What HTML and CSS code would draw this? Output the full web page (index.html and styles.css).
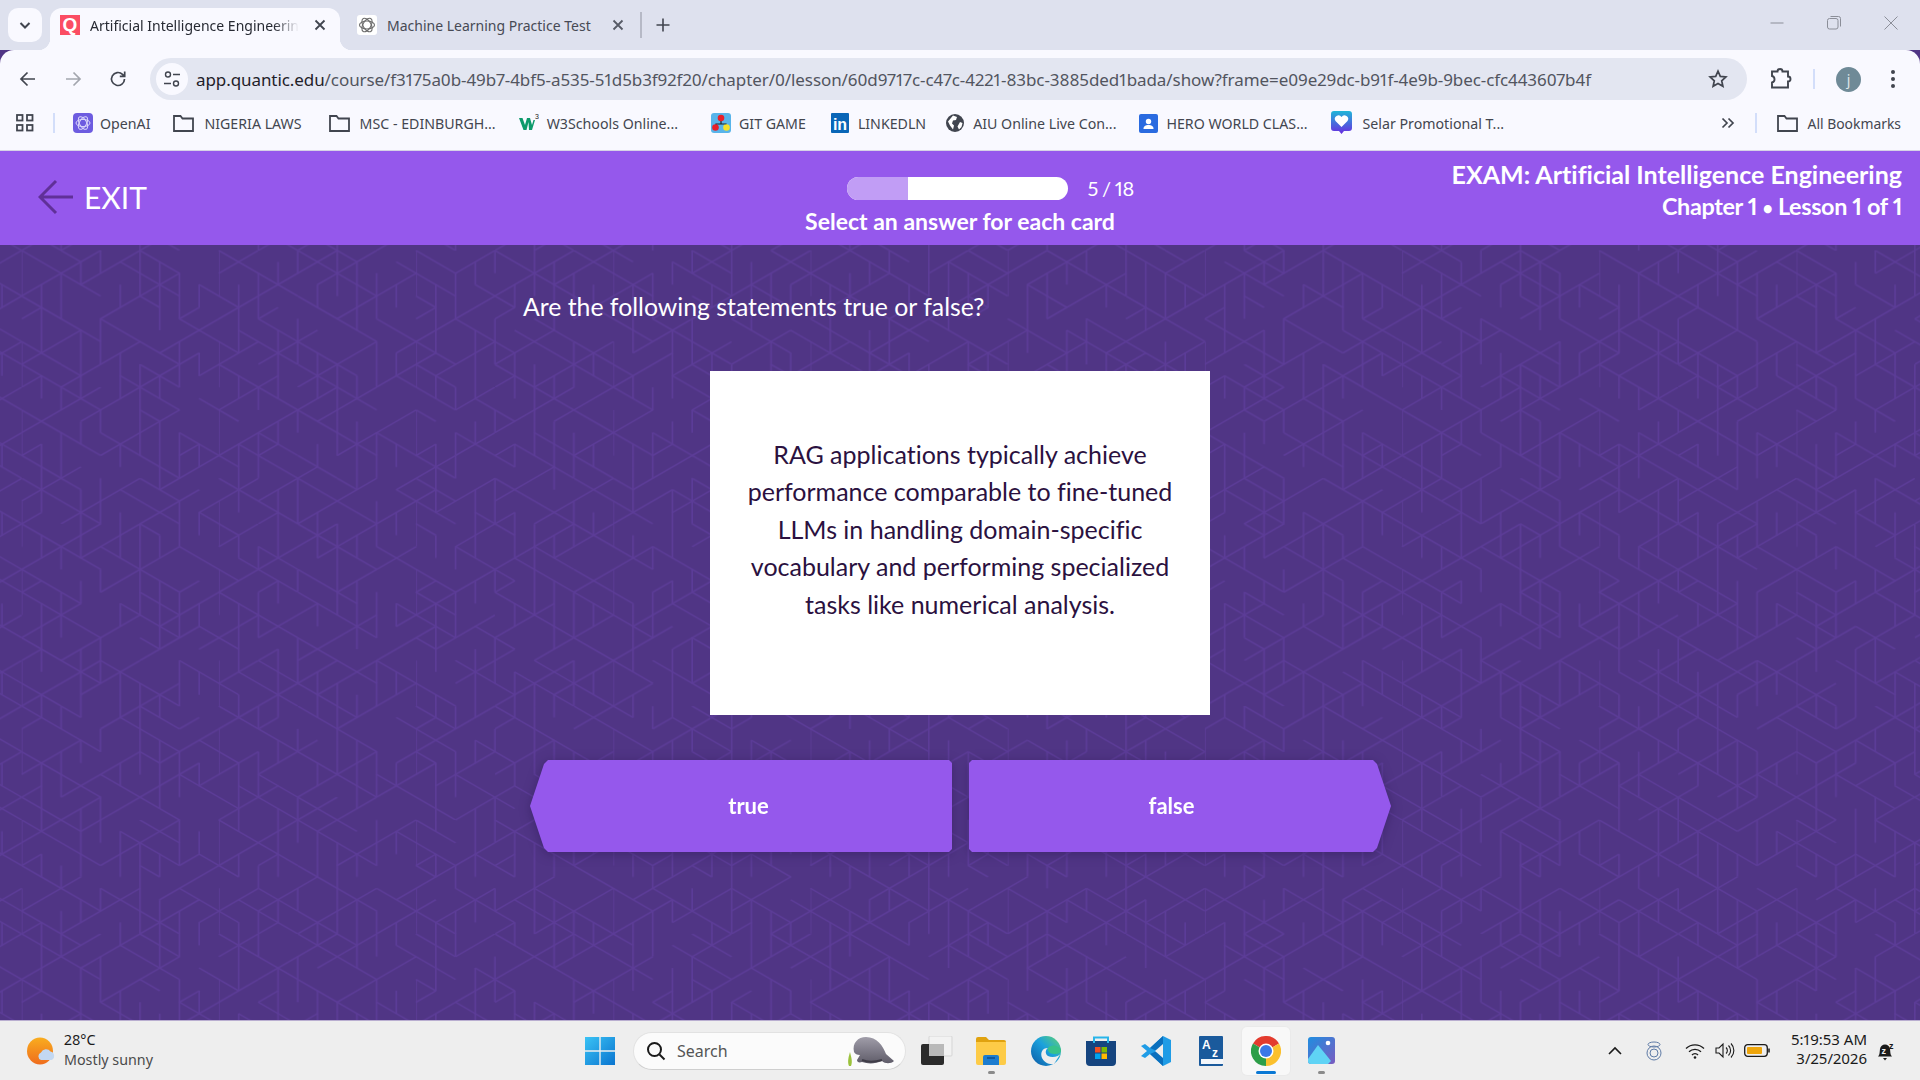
FILE: index.html
```html
<!DOCTYPE html>
<html lang="en">
<head>
    <meta charset="UTF-8">
    <title>Artificial Intelligence Engineering</title>
    <link rel="stylesheet" href="styles.css">
</head>
<body>
    <div class="tabstrip">
        <div class="tab-menu">
            <svg width="16" height="16" viewBox="0 0 16 16"><path d="M3.500 6l4.500 4.500L12.500 6" class="ink" stroke-width="2"/></svg>
        </div>
        <div class="tab tab-active">
            <svg class="favicon" width="20" height="20" viewBox="0 0 20 20"><rect width="20" height="20" fill="#fb4d63"/><text x="10" y="16" text-anchor="middle" class="fav-q">Q</text></svg>
            <span class="tab-title">Artificial Intelligence Engineering</span>
            <svg width="14" height="14" viewBox="0 0 14 14"><path d="M2.500 2.500l9 9M11.500 2.500l-9 9" class="ink" stroke-width="1.800"/></svg>
        </div>
        <div class="tab">
            <svg class="favicon" width="20" height="20" viewBox="0 0 20 20"><rect width="20" height="20" rx="3" fill="#fff"/><g fill="none" stroke="#6b6b6b" stroke-width="1.100"><ellipse cx="10" cy="10" rx="7.500" ry="4"/><ellipse cx="10" cy="10" rx="7.500" ry="4" transform="rotate(60 10 10)"/><ellipse cx="10" cy="10" rx="7.500" ry="4" transform="rotate(120 10 10)"/></g></svg>
            <span class="tab-title">Machine Learning Practice Test</span>
            <svg width="14" height="14" viewBox="0 0 14 14"><path d="M2.500 2.500l9 9M11.500 2.500l-9 9" class="ink-soft" stroke-width="1.800"/></svg>
        </div>
        <div class="tab-sep"></div>
        <svg class="tab-plus" width="16" height="16" viewBox="0 0 16 16"><path d="M8 1.500v13M1.500 8h13" class="ink" stroke-width="1.600"/></svg>
        <div class="win-controls">
            <svg width="16" height="16" viewBox="0 0 16 16"><path d="M1.500 8h13" class="win-line"/></svg>
            <svg width="16" height="16" viewBox="0 0 16 16"><rect x="1.500" y="3.500" width="10.500" height="10.500" rx="2" class="win-line"/><path d="M4.500 1.500h8a2 2 0 0 1 2 2v8" class="win-line"/></svg>
            <svg width="16" height="16" viewBox="0 0 16 16"><path d="M1.500 1.500l13 13M14.500 1.500l-13 13" class="win-line"/></svg>
        </div>
    </div>

    <div class="toolbar">
        <div class="nav-btn"><svg width="20" height="20" viewBox="0 0 20 20"><path d="M17 10H3.500M9.500 3.500L3 10l6.500 6.500" class="ink" stroke-width="1.700"/></svg></div>
        <div class="nav-btn"><svg width="20" height="20" viewBox="0 0 20 20"><path d="M3 10h13.500M10.500 3.500L17 10l-6.500 6.500" class="ink-off" stroke-width="1.700"/></svg></div>
        <div class="nav-btn"><svg width="20" height="20" viewBox="0 0 20 20"><path d="M16.500 10a6.500 6.500 0 1 1-2-4.700L16.500 7.200M16.700 2.500v4.900h-4.900" class="ink" stroke-width="1.700"/></svg></div>
        <div class="omnibox">
            <div class="site-info">
                <svg width="18" height="18" viewBox="0 0 18 18"><circle cx="5" cy="4.500" r="2.500" class="ink" stroke-width="1.400"/><path d="M10 4.500h7M1 13.500h7" class="ink" stroke-width="1.400"/><circle cx="13" cy="13.500" r="2.500" class="ink" stroke-width="1.400"/></svg>
            </div>
            <div class="url"><span class="url-host">app.quantic.edu</span>/course/f3175a0b-49b7-4bf5-a535-51d5b3f92f20/chapter/0/lesson/60d9717c-c47c-4221-83bc-3885ded1bada/show?frame=e09e29dc-b91f-4e9b-9bec-cfc443607b4f</div>
            <svg class="star" width="20" height="20" viewBox="0 0 20 20"><path d="M10 2.200l2.300 5.200 5.600.6-4.200 3.800 1.200 5.500L10 14.500l-4.900 2.800 1.200-5.500L2.100 8l5.600-.6z" class="ink" stroke-width="1.700"/></svg>
        </div>
        <div class="tool-actions">
            <svg width="22" height="22" viewBox="0 0 22 22"><path d="M2 3.500h5.500a2.500 2.500 0 0 1 5 0H18v5a2.500 2.500 0 0 1 0 5v6H2v-5a3 3 0 0 0 2.500-3A3.500 3.500 0 0 0 2 8z" class="ink" stroke-width="1.900"/></svg>
            <div class="tool-sep"></div>
            <div class="avatar">j</div>
            <svg width="6" height="20" viewBox="0 0 6 20"><circle cx="3" cy="3" r="2" fill="#41454f"/><circle cx="3" cy="10" r="2" fill="#41454f"/><circle cx="3" cy="17" r="2" fill="#41454f"/></svg>
        </div>
    </div>

    <div class="bookmarks">
        <svg class="bm-apps" width="18" height="18" viewBox="0 0 18 18"><g fill="none" stroke="#41454f" stroke-width="1.800"><rect x="1" y="1" width="5.500" height="5.500"/><rect x="11" y="1" width="5.500" height="5.500"/><rect x="1" y="11" width="5.500" height="5.500"/><rect x="11" y="11" width="5.500" height="5.500"/></g></svg>
        <div class="bm-sep"></div>
        <div class="bm bm-openai">
            <svg width="20" height="20" viewBox="0 0 20 20"><rect width="20" height="20" rx="4" fill="#6d5ce0"/><g fill="none" stroke="#dcd8fb" stroke-width="1"><ellipse cx="10" cy="10" rx="7" ry="3.600"/><ellipse cx="10" cy="10" rx="7" ry="3.600" transform="rotate(60 10 10)"/><ellipse cx="10" cy="10" rx="7" ry="3.600" transform="rotate(120 10 10)"/></g></svg>
            <span class="bm-text">OpenAI</span>
        </div>
        <div class="bm bm-laws">
            <svg width="21" height="18" viewBox="0 0 21 18"><path d="M1 2h6.500l2 2.500H20V17H1z" class="ink" stroke-width="1.800"/></svg>
            <span class="bm-text">NIGERIA LAWS</span>
        </div>
        <div class="bm bm-msc">
            <svg width="21" height="18" viewBox="0 0 21 18"><path d="M1 2h6.500l2 2.500H20V17H1z" class="ink" stroke-width="1.800"/></svg>
            <span class="bm-text">MSC - EDINBURGH...</span>
        </div>
        <div class="bm bm-w3">
            <svg width="20" height="20" viewBox="0 0 20 20"><path d="M0 5h3.500l2.500 7 2-7h3l2 7 1.500-5H16l-3 10h-3L9.500 9 7.500 17H4.500z" fill="#0d9a6b"/><text x="16" y="6" class="w3-sup">3</text></svg>
            <span class="bm-text">W3Schools Online...</span>
        </div>
        <div class="bm bm-git">
            <svg width="20" height="20" viewBox="0 0 20 20"><rect width="20" height="20" rx="3" fill="#58b4ea"/><path d="M10 6v5M5 14v-3h10v3" fill="none" stroke="#222" stroke-width="1.200"/><circle cx="10" cy="5" r="3.300" fill="#e8202a"/><circle cx="4.500" cy="14.500" r="3.300" fill="#e8202a"/><circle cx="15.500" cy="14.500" r="3.300" fill="#f5e22a"/></svg>
            <span class="bm-text">GIT GAME</span>
        </div>
        <div class="bm bm-in">
            <svg width="18" height="20" viewBox="0 0 18 20"><rect width="18" height="20" rx="1" fill="#0a66b7"/><text x="9" y="16.500" text-anchor="middle" class="in-text">in</text></svg>
            <span class="bm-text">LINKEDLN</span>
        </div>
        <div class="bm bm-aiu">
            <svg width="18" height="18" viewBox="0 0 18 18"><circle cx="9" cy="9" r="9" fill="#41454f"/><path d="M7 1.500l4 1.500-1 3-3 .5-1 3 2 2-1 4-3-4-2-4zM14 8l2.500 1-1 4-2.500 2.500-1.500-3z" fill="#fff"/></svg>
            <span class="bm-text">AIU Online Live Con...</span>
        </div>
        <div class="bm bm-hero">
            <svg width="19" height="19" viewBox="0 0 19 19"><rect width="19" height="19" rx="2" fill="#2a6be0"/><circle cx="9.500" cy="7.500" r="2.700" fill="#fff"/><path d="M4.500 15c0-3 2-4 5-4s5 1 5 4z" fill="#fff"/></svg>
            <span class="bm-text">HERO WORLD CLAS...</span>
        </div>
        <div class="bm bm-selar">
            <svg width="21" height="24" viewBox="0 0 21 24"><defs><linearGradient id="selarFill" x1="0" y1="0" x2="0" y2="1"><stop offset="0" stop-color="#1fb6d8"/><stop offset="1" stop-color="#6a2be0"/></linearGradient></defs><path d="M3 0h15a3 3 0 0 1 3 3v14a3 3 0 0 1-3 3h-5l-2.500 3L8 20H3a3 3 0 0 1-3-3V3a3 3 0 0 1 3-3z" fill="url(#selarFill)"/><path d="M10.500 16L4.500 10a3.500 3.500 0 0 1 6-4 3.500 3.500 0 0 1 6 4z" fill="#fff"/></svg>
            <span class="bm-text">Selar Promotional T...</span>
        </div>
        <svg class="bm-more" width="14" height="12" viewBox="0 0 14 12"><path d="M1.500 1.500L6 6l-4.500 4.500M7.500 1.500L12 6l-4.500 4.500" class="ink" stroke-width="1.700"/></svg>
        <div class="bm-sep bm-sep-end"></div>
        <div class="bm bm-all">
            <svg width="21" height="18" viewBox="0 0 21 18"><path d="M1 2h6.500l2 2.500H20V17H1z" class="ink" stroke-width="1.800"/></svg>
            <span class="bm-text">All Bookmarks</span>
        </div>
    </div>

    <header class="lesson-header">
        <div class="exit">
            <svg width="36" height="36" viewBox="0 0 36 36"><path d="M35 18H3M18 2L2 18l16 16" fill="none" stroke="#603098" stroke-width="3"/></svg>
            <span>EXIT</span>
        </div>
        <div class="progress-wrap">
            <div class="progress-row">
                <div class="progress-bar"><div class="progress-fill"></div></div>
                <span class="progress-count">5 / 18</span>
            </div>
            <div class="instruction">Select an answer for each card</div>
        </div>
        <div class="exam-title">
            <div>EXAM: Artificial Intelligence Engineering</div>
            <div class="exam-sub">Chapter 1 <span class="exam-dot">&bull;</span> Lesson 1 of 1</div>
        </div>
    </header>

    <main class="lesson">
        <svg class="lesson-bg" width="100%" height="100%">
            <defs>
                <pattern id="gridV" width="10" height="14" patternUnits="userSpaceOnUse" patternTransform="translate(21.700 5.500) scale(19.720 11.390)">
                    <path d="M0 0V4M0 8V12M1 3V9M1 11V13M2 2V6M2 12V14M3 1V3M3 7V13M4 0V2M4 6V10M5 3V5M5 9V13M6 0V4M6 10V14M7 1V7M7 11V13M8 2V6M8 8V12M9 3V5M9 9V11" fill="none" stroke="#5c3c98" stroke-width=".08"/>
                </pattern>
                <pattern id="gridA" width="14" height="10" patternUnits="userSpaceOnUse" patternTransform="translate(21.700 5.500) scale(19.720 11.390)">
                    <path d="M0 0l4 4M1 5l3 3M2 0l1 1M5 1l3 3M4 6l4 4M6 0l2 2M9 3l2 2M8 6l3 3M10 0l4 4M12 6l2 2M0 8l2 2M3 3l1 1M11 1l1 1M6 4l1 1M0 4l1 1M11 7l3 3" fill="none" stroke="#5c3c98" stroke-width=".1"/>
                </pattern>
                <pattern id="gridB" width="12" height="12" patternUnits="userSpaceOnUse" patternTransform="translate(21.700 5.500) scale(19.720 11.390)">
                    <path d="M0 4l4-4M0 10l3-3M2 12l4-4M5 5l3-3M4 2l2-2M7 9l4-4M6 12l3-3M10 2l2-2M9 11l3-3M0 6l1-1M8 6l1-1M3 3l1-1M4 6l2-2M0 12l1-1M10 6l2-2" fill="none" stroke="#5c3c98" stroke-width=".1"/>
                </pattern>
            </defs>
            <rect width="100%" height="100%" fill="url(#gridV)"/>
            <rect width="100%" height="100%" fill="url(#gridA)"/>
            <rect width="100%" height="100%" fill="url(#gridB)"/>
        </svg>
        <div class="lesson-inner">
            <h1 class="question">Are the following statements true or false?</h1>
            <div class="card">RAG applications typically achieve performance comparable to fine-tuned LLMs in handling domain-specific vocabulary and performing specialized tasks like numerical analysis.</div>
            <div class="answers">
                <div class="answer answer-true">true</div>
                <div class="answer answer-false">false</div>
            </div>
        </div>
    </main>

    <footer class="taskbar">
        <div class="weather">
            <svg width="28" height="28" viewBox="0 0 28 28"><defs><linearGradient id="sunFill" x1="0" y1="0" x2="0" y2="1"><stop offset="0" stop-color="#f9ad1f"/><stop offset="1" stop-color="#ef6c1d"/></linearGradient></defs><ellipse cx="13" cy="14" rx="13" ry="13.500" fill="url(#sunFill)"/><path d="M14 23a4 4 0 0 1 0-7.500 5.500 5.500 0 0 1 9.500-1 4.500 4.500 0 0 1 1 8.500z" fill="#c3d8f2"/></svg>
            <div class="weather-text">
                <div class="weather-temp">28&deg;C</div>
                <div class="weather-desc">Mostly sunny</div>
            </div>
        </div>
        <div class="task-center">
            <svg class="start" width="30" height="30" viewBox="0 0 30 30"><defs><linearGradient id="winFill" x1="0" y1="0" x2="1" y2="1"><stop offset="0" stop-color="#3ac3f5"/><stop offset="1" stop-color="#0a74cf"/></linearGradient></defs><path d="M0 1h14.300v13.300H0zM15.700 1H30v13.300H15.700zM0 15.700h14.300V29H0zM15.700 15.700H30V29H15.700z" fill="url(#winFill)"/></svg>
            <div class="search">
                <svg width="20" height="20" viewBox="0 0 20 20"><circle cx="8.500" cy="8.500" r="6.500" class="ink-black" stroke-width="2"/><path d="M13.500 13.500l5 5" class="ink-black" stroke-width="2"/></svg>
                <span>Search</span>
                <svg class="manatee" width="52" height="34" viewBox="0 0 52 34"><defs><linearGradient id="manateeFill" x1="0" y1="0" x2="0" y2="1"><stop offset="0" stop-color="#a09da9"/><stop offset="1" stop-color="#5f5c69"/></linearGradient></defs><path d="M6 32c-2-5 0-10 1-14 1 5 3 9 1 14z" fill="#9bc23c"/><path d="M11 18C9 9 15 3 23 3c11 0 17 9 20 17l8 7c-3 3-9 3-12 0-7 3-14 3-20 1-3 1-5 0-5-2l3-5c-3 0-5-1-6-3z" fill="url(#manateeFill)"/><path d="M19 26c5 2 13 2 20 0" fill="none" stroke="#3f3d47" stroke-width="2"/></svg>
            </div>
            <div class="task-icon task-view">
                <svg width="32" height="30" viewBox="0 0 32 30"><rect x="8" y="0" width="23" height="20" rx="1" fill="#f2f2f2" stroke="#d5d5d5"/><rect x="0" y="8" width="23" height="21" rx="2" fill="#2b2b2b"/><rect x="8" y="8" width="15" height="12" fill="#b9b9b9"/></svg>
            </div>
            <div class="task-icon task-run task-files">
                <svg width="30" height="28" viewBox="0 0 30 28"><path d="M0 2a2 2 0 0 1 2-2h8l3 3h15a2 2 0 0 1 2 2v3H0z" fill="#e0a20f"/><path d="M0 5h30v21a2 2 0 0 1-2 2H2a2 2 0 0 1-2-2z" fill="#fdcb47"/><path d="M7 28v-8a2 2 0 0 1 2-2h12a2 2 0 0 1 2 2v8z" fill="#1c7ccf"/><path d="M11 21h8" stroke="#0c4d8f" stroke-width="1.500"/></svg>
            </div>
            <div class="task-icon">
                <svg width="30" height="30" viewBox="0 0 30 30"><defs><linearGradient id="edgeFill" x1="0" y1="1" x2="1" y2="0"><stop offset="0" stop-color="#0c59a4"/><stop offset=".55" stop-color="#1ba1dd"/><stop offset="1" stop-color="#62d56d"/></linearGradient></defs><circle cx="15" cy="15" r="15" fill="url(#edgeFill)"/><path d="M30 17c-2 4-9 5-13 3-3-2-3-6 0-8-6 0-8 5-6 10 2 4 7 7 12 6z" fill="#eee"/><path d="M30 14c0 3-3 4-7 4-4 0-7-3-6-6 1-2 5-3 8-2 3 1 5 2 5 4z" fill="#37c28a"/></svg>
            </div>
            <div class="task-icon">
                <svg width="30" height="30" viewBox="0 0 30 30"><path d="M0 5h30v21a4 4 0 0 1-4 4H4a4 4 0 0 1-4-4z" fill="#15447f"/><path d="M8 7V1.500h14V7" fill="none" stroke="#28b5ea" stroke-width="2"/><rect x="9" y="11" width="5.500" height="5.500" fill="#f25022"/><rect x="15.500" y="11" width="5.500" height="5.500" fill="#7fba00"/><rect x="9" y="17.500" width="5.500" height="5.500" fill="#00a4ef"/><rect x="15.500" y="17.500" width="5.500" height="5.500" fill="#ffb900"/></svg>
            </div>
            <div class="task-icon">
                <svg width="30" height="30" viewBox="0 0 30 30"><path d="M22 0l8 4v22l-8 4-13-12-5 4-4-2 6-5-6-5 4-2 5 4z" fill="#1f9ce6"/><path d="M22 0v30l-13-12 7-3-7-3z" fill="#0a6fbd"/><path d="M22 8v14l-8-7z" fill="#eee"/></svg>
            </div>
            <div class="task-icon">
                <svg width="24" height="30" viewBox="0 0 24 30"><rect width="24" height="30" rx="1" fill="#1a5a9c"/><rect x="2" y="23" width="22" height="5" fill="#f3f6fa"/><text x="3" y="13" class="az-text">A</text><text x="13" y="21" class="az-text">z</text></svg>
            </div>
            <div class="task-icon task-chrome">
                <svg width="30" height="30" viewBox="0 0 30 30"><path d="M15 15L2 7.500A15 15 0 0 1 28 7.500z" fill="#e33b2e"/><path d="M15 15L2 7.500A15 15 0 0 0 15 30z" fill="#2d9e48"/><path d="M15 15L28 7.500A15 15 0 0 1 15 30z" fill="#fbc02d"/><circle cx="15" cy="15" r="7.500" fill="#fff"/><circle cx="15" cy="15" r="6" fill="#3b78e7"/></svg>
            </div>
            <div class="task-icon task-run task-photos">
                <svg width="27" height="27" viewBox="0 0 27 27"><defs><linearGradient id="photoFill" x1="0" y1="0" x2="1" y2="1"><stop offset="0" stop-color="#1f8ee0"/><stop offset="1" stop-color="#7a5bc0"/></linearGradient></defs><rect width="27" height="27" rx="3" fill="url(#photoFill)"/><path d="M0 22l10-14 9 11 4 5-3 3H3a3 3 0 0 1-3-3z" fill="#5fd3f5"/><circle cx="20" cy="6" r="2.300" fill="#fff"/></svg>
            </div>
        </div>
        <div class="tray">
            <svg width="14" height="9" viewBox="0 0 14 9"><path d="M1 8l6-6 6 6" class="ink-black" stroke-width="1.600"/></svg>
            <svg class="tray-ring" width="16" height="20" viewBox="0 0 16 20"><g fill="none" stroke="#5f7ba6" stroke-width="1"><ellipse cx="8" cy="3.500" rx="6" ry="2.500"/><circle cx="8" cy="12" r="7"/><circle cx="8" cy="12" r="4"/></g></svg>
            <svg class="tray-wifi" width="20" height="16" viewBox="0 0 20 16"><g class="ink-black" stroke-width="1.300"><path d="M1 5.500a13 13 0 0 1 18 0"/><path d="M4 8.800a8.500 8.500 0 0 1 12 0"/><path d="M7 12a4 4 0 0 1 6 0"/></g><circle cx="10" cy="14.500" r="1.300" fill="#1a1a1a"/></svg>
            <svg class="tray-vol" width="20" height="17" viewBox="0 0 20 17"><g class="ink-black" stroke-width="1.100"><path d="M1 6h3l4-4v13l-4-4H1z"/><path d="M11 5.500a4 4 0 0 1 0 6"/><path d="M13.500 3.500a7 7 0 0 1 0 10"/><path d="M16 1.500a10 10 0 0 1 0 14"/></g></svg>
            <svg class="tray-batt" width="26" height="13" viewBox="0 0 26 13"><rect x=".7" y=".7" width="22.600" height="11.600" rx="3" fill="none" stroke="#1a1a1a" stroke-width="1.300"/><rect x="3" y="3" width="15" height="7" rx="1" fill="#eea50a"/><path d="M25 4.500v4" stroke="#1a1a1a" stroke-width="1.500"/></svg>
            <div class="clock">
                <div>5:19:53 AM</div>
                <div>3/25/2026</div>
            </div>
            <svg class="tray-bell" width="18" height="20" viewBox="0 0 18 20"><path d="M0 15.500c2-2 1.500-4 2-7.500.5-3 2.500-4.500 5-4.500s4.500 1.500 5 4.500c.5 3.500 0 5.500 2 7.500z" fill="#1a1a1a"/><path d="M5 17h4l-2 2.500z" fill="#1a1a1a"/><text x="3.500" y="13" class="bell-z">z</text><text x="11" y="8" class="bell-zz">z</text></svg>
        </div>
    </footer>
</body>
</html>
```

FILE: styles.css
```css
* {
    margin: 0;
    padding: 0;
    box-sizing: border-box;
}
body {
    width: 1920px;
    height: 1080px;
    overflow: hidden;
    display: flex;
    flex-direction: column;
    font-family: "Lato", "Open Sans", sans-serif;
    font-variant-ligatures: none;
    font-variant-numeric: proportional-nums;
    background-color: #503585;
}
svg {
    flex-shrink: 0;
    display: block;
}
.ink, .ink-soft, .ink-off, .ink-black, .win-line {
    fill: none;
    stroke: #41454f;
}
.ink-soft {
    stroke: #565a66;
}
.ink-off {
    stroke: #a3a6ae;
}
.ink-black {
    stroke: #1a1a1a;
}
.win-line {
    stroke: #8b8e98;
    stroke-width: 1;
}

/* Browser chrome */
.tabstrip {
    height: 50px;
    display: flex;
    align-items: flex-start;
    background-color: #dee1ee;
    font-family: "Noto Sans", sans-serif;
    font-size: 14px;
    padding: 8px 0 0 8px;
}
.tab-menu {
    width: 34px;
    height: 34px;
    display: flex;
    align-items: center;
    justify-content: center;
    background-color: #f9f9ff;
    border-radius: 10px;
}
.tab {
    width: 290px;
    height: 42px;
    display: flex;
    align-items: center;
    padding: 0 13px 8px 10px;
    position: relative;
    color: #474a55;
}
.tab-active {
    margin-left: 8px;
    background-color: #f9f9ff;
    border-radius: 12px 12px 0 0;
    color: #272a33;
}
.tab-active::before, .tab-active::after {
    content: "";
    position: absolute;
    bottom: 0;
    width: 12px;
    height: 12px;
}
.tab-active::before {
    left: -12px;
    background: radial-gradient(circle at 0 0, transparent 12px, #f9f9ff 12.500px);
}
.tab-active::after {
    right: -12px;
    background: radial-gradient(circle at 100% 0, transparent 12px, #f9f9ff 12.500px);
}
.tab:not(.tab-active) {
    width: 299px;
    padding: 0 14px 8px 17px;
}
.tab-title {
    flex: 1;
    margin-left: 10px;
    white-space: nowrap;
    overflow: hidden;
}
.tab-active .tab-title {
    margin-right: 14px;
    -webkit-mask-image: linear-gradient(to right, #000 88%, transparent);
    mask-image: linear-gradient(to right, #000 88%, transparent);
}
.tab-sep {
    width: 2px;
    height: 26px;
    margin: 4px 0 0 1px;
    background-color: #b6b9c6;
}
.tab-plus {
    margin: 9px 0 0 13px;
}
.win-controls {
    margin-left: auto;
    display: flex;
    gap: 41px;
    padding: 7px 21px 0 0;
}
.toolbar {
    height: 50px;
    display: flex;
    align-items: center;
    background-color: #f9f9ff;
    border-radius: 14px 14px 0 0;
    padding: 8px 0 0 5px;
}
.nav-btn {
    width: 45px;
    display: flex;
    justify-content: center;
}
.omnibox {
    width: 1597px;
    height: 42px;
    margin-left: 10px;
    display: flex;
    align-items: center;
    background-color: #e3e6f1;
    border-radius: 21px;
    padding: 0 19px 0 6px;
}
.site-info {
    width: 32px;
    height: 32px;
    display: flex;
    align-items: center;
    justify-content: center;
    background-color: #f9f9ff;
    border-radius: 50%;
}
.url {
    flex: 1;
    margin-left: 8px;
    font-family: "Noto Sans", sans-serif;
    font-size: 17px;
    letter-spacing: -0.08px;
    color: #52555f;
    white-space: nowrap;
    overflow: hidden;
}
.url-host {
    color: #1f2129;
}
.tool-actions {
    flex: 1;
    display: flex;
    align-items: center;
    padding-left: 23px;
}
.tool-sep {
    width: 2px;
    height: 20px;
    margin-left: 21px;
    background-color: #d3defa;
}
.avatar {
    width: 25px;
    height: 25px;
    margin-left: 21px;
    border-radius: 50%;
    background-color: #6f8a97;
    color: #dfe7ea;
    font-family: "Noto Sans", sans-serif;
    font-size: 14px;
    text-align: center;
    line-height: 25px;
}
.tool-actions svg:last-child {
    margin-left: 29px;
}
.bookmarks {
    height: 51px;
    display: flex;
    align-items: center;
    background-color: #f9f9ff;
    border-bottom: 1px solid #d6d3e6;
    padding: 0 0 4px 16px;
    font-family: "Noto Sans", sans-serif;
    font-size: 14.200px;
    color: #43464f;
}
.bm-sep {
    width: 2px;
    height: 20px;
    margin-left: 19px;
    background-color: #d3defa;
}
.bm {
    display: flex;
    align-items: center;
    gap: 8px;
    white-space: nowrap;
}
.bm-openai { margin-left: 18px; gap: 7px; }
.bm-laws { margin-left: 23px; gap: 10px; }
.bm-msc { margin-left: 27px; gap: 10px; }
.bm-w3 { margin-left: 23px; }
.bm-git { margin-left: 33px; }
.bm-in { margin-left: 25px; gap: 9px; }
.bm-aiu { margin-left: 20px; gap: 9px; }
.bm-hero { margin-left: 23px; }
.bm-selar { margin-left: 23px; gap: 11px; }
.bm-more { margin-left: auto; }
.bm-sep-end { margin-left: 20px; }
.bm-all { margin: 0 19px 0 20px; gap: 10px; font-size: 13.900px; }

/* Lesson header */
.lesson-header {
    height: 94px;
    display: grid;
    grid-template-columns: 1fr auto 1fr;
    align-items: center;
    background-color: #9558ec;
    color: #fff;
    padding: 0 18px;
}
.exit {
    display: flex;
    align-items: center;
    gap: 10px;
    margin: -2px 0 0 20px;
    font-size: 30px;
}
.progress-wrap {
    align-self: start;
    display: flex;
    flex-direction: column;
    align-items: center;
    padding-top: 25px;
}
.progress-row {
    display: flex;
    align-items: center;
    gap: 20px;
    margin-left: 60px;
}
.progress-bar {
    width: 221px;
    height: 23px;
    background-color: #fff;
    border-radius: 12px;
    overflow: hidden;
}
.progress-fill {
    width: 61px;
    height: 100%;
    background-color: #c19df5;
}
.progress-count {
    width: 46px;
    font-size: 20px;
    word-spacing: -1.500px;
    white-space: nowrap;
}
.instruction {
    margin-top: 7px;
    font-size: 23px;
    line-height: 28px;
    font-weight: 700;
}
.exam-title {
    align-self: start;
    padding-top: 7px;
    text-align: right;
    font-size: 25px;
    font-weight: 700;
    line-height: 32px;
}
.exam-sub {
    font-size: 23.400px;
    letter-spacing: -0.35px;
}
.exam-dot {
    font-size: 18px;
}

/* Lesson body */
.lesson {
    flex: 1;
    position: relative;
    background-color: #503585;
}
.lesson-bg {
    position: absolute;
    top: 0;
    left: 0;
}
.lesson-inner {
    position: relative;
    width: 876px;
    margin: 0 auto;
    padding-top: 46px;
}
.question {
    font-size: 24.800px;
    font-weight: 400;
    line-height: 32px;
    color: #fff;
    padding-left: 1px;
}
.card {
    width: 500px;
    height: 344px;
    margin: 48px auto 0;
    padding: 0 36px 27px;
    display: flex;
    align-items: center;
    text-align: center;
    background-color: #fff;
    color: #2b1140;
    font-size: 25px;
    line-height: 37.600px;
}
.answers {
    display: flex;
    gap: 17px;
    margin-top: 45px;
    padding-left: 8px;
    filter: drop-shadow(0 2px 6px rgba(40, 20, 80, 0.45));
}
.answer {
    width: 422px;
    height: 92px;
    display: flex;
    align-items: center;
    justify-content: center;
    padding-bottom: 2px;
    background-color: #9558ec;
    color: #fff;
    font-size: 22px;
    font-weight: 700;
}
.answer-true {
    padding-left: 15px;
    clip-path: polygon(0 50%, 14px 4px, 18px 0, calc(100% - 3px) 0, 100% 3px, 100% calc(100% - 3px), calc(100% - 3px) 100%, 18px 100%, 14px calc(100% - 4px));
}
.answer-false {
    padding-right: 17px;
    clip-path: polygon(100% 50%, calc(100% - 14px) 4px, calc(100% - 18px) 0, 3px 0, 0 3px, 0 calc(100% - 3px), 3px 100%, calc(100% - 18px) 100%, calc(100% - 14px) calc(100% - 4px));
}

/* Windows taskbar */
.taskbar {
    height: 60px;
    display: flex;
    align-items: center;
    background-color: #eeeeee;
    border-top: 1px solid #b9aed0;
    font-family: "Noto Sans", sans-serif;
    color: #1a1a1a;
}
.weather {
    width: 585px;
    display: flex;
    align-items: center;
    gap: 9px;
    padding-left: 27px;
    font-size: 14.300px;
    line-height: 20px;
}
.weather-text {
    margin-top: -2px;
}
.weather-desc {
    color: #4a4a4a;
}
.task-center {
    display: flex;
    align-items: center;
}
.search {
    width: 273px;
    height: 38px;
    margin-left: 18px;
    display: flex;
    align-items: center;
    gap: 11px;
    padding-left: 12px;
    background-color: #fbfbfb;
    border: 1px solid #e2e2e2;
    border-bottom-color: #cfcfcf;
    border-radius: 19px;
    font-size: 16px;
    color: #555;
}
.manatee {
    margin-left: auto;
    margin-right: 10px;
}
.task-icon {
    width: 48px;
    height: 48px;
    margin-left: 7px;
    display: flex;
    align-items: center;
    justify-content: center;
    position: relative;
    border-radius: 5px;
}
.task-view {
    margin-left: 13px;
    width: 36px;
}
.task-files {
    margin-left: 12px;
}
.task-run::after, .task-chrome::after {
    content: "";
    position: absolute;
    left: 50%;
    bottom: 1px;
    width: 7px;
    height: 3px;
    margin-left: -3.500px;
    border-radius: 2px;
    background-color: #8a8a8a;
}
.task-chrome {
    background-color: #f8f8f8;
    box-shadow: 0 0 0 1px #eaeaea;
}
.task-chrome::after {
    width: 20px;
    margin-left: -10px;
    background-color: #0a78d4;
}
.tray {
    margin-left: auto;
    display: flex;
    align-items: center;
    padding-right: 24px;
}
.tray-ring { margin-left: 24px; }
.tray-wifi { margin-left: 23px; }
.tray-vol { margin-left: 10px; }
.tray-batt { margin-left: 9px; }
.clock {
    width: 97px;
    margin-top: -3px;
    text-align: right;
    font-size: 15px;
    line-height: 19px;
}
.tray-bell {
    margin-left: 11px;
}

/* svg text */
.fav-q {
    font-family: "Liberation Sans", sans-serif;
    font-size: 19px;
    font-weight: 700;
    fill: #fff;
}
.w3-sup {
    font-family: "Liberation Sans", sans-serif;
    font-size: 7px;
    fill: #222;
}
.in-text {
    font-family: "Liberation Sans", sans-serif;
    font-size: 16px;
    font-weight: 700;
    fill: #fff;
}
.az-text {
    font-family: "Liberation Sans", sans-serif;
    font-size: 12px;
    font-weight: 700;
    fill: #fff;
}
.bell-z {
    font-family: "Liberation Sans", sans-serif;
    font-size: 9px;
    font-weight: 700;
    fill: #eee;
}
.bell-zz {
    font-family: "Liberation Sans", sans-serif;
    font-size: 9px;
    font-weight: 700;
    fill: #1a1a1a;
}
```
